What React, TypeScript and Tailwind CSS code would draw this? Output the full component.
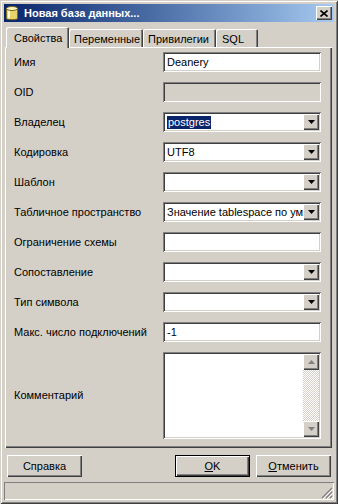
import React from 'react';

const sunken = 'shadow-[inset_1px_1px_#808080,inset_-1px_-1px_#fff,inset_2px_2px_#404040,inset_-2px_-2px_#d4d0c8]';
const raised = 'shadow-[inset_1px_1px_#fff,inset_-1px_-1px_#404040,inset_-2px_-2px_#808080]';
const tabEdge = 'rounded-t-[2px] shadow-[inset_1px_1px_#fff,inset_-1px_0_#404040,inset_-2px_0_#808080]';

const Arrow: React.FC<{ up?: boolean; color?: string }> = ({ up, color = '#000' }) => (
  <svg width="7" height="4" viewBox="0 0 7 4">
    {up ? <path d="M3.5 0 L7 4 L0 4 Z" fill={color} /> : <path d="M0 0 L7 0 L3.5 4 Z" fill={color} />}
  </svg>
);

const DropBtn: React.FC = () => (
  <div className={`w-[16px] h-full bg-[#d4d0c8] flex items-center justify-center ${raised}`}>
    <Arrow />
  </div>
);

const TextField: React.FC<{ value?: string; disabled?: boolean }> = ({ value, disabled }) => (
  <div className={`w-[158px] h-[20px] ${disabled ? 'bg-[#d4d0c8]' : 'bg-white'} ${sunken} flex items-center px-[4px]`}>
    {value}
  </div>
);

const Combo: React.FC<{ value?: string; selected?: boolean }> = ({ value, selected }) => (
  <div className={`w-[158px] h-[20px] bg-white ${sunken} p-[2px] flex`}>
    <div className="flex-1 min-w-0 flex items-center pl-[2px] overflow-hidden whitespace-nowrap">
      {selected ? <span className="bg-[#0a246a] text-white pl-[1px] pr-[1px] leading-[13px]">{value}</span> : value}
    </div>
    <DropBtn />
  </div>
);

type Row = { label: string; kind: 'text' | 'combo' | 'disabled'; value?: string; selected?: boolean };

const ROWS: Row[] = [
  { label: 'Имя', kind: 'text', value: 'Deanery' },
  { label: 'OID', kind: 'disabled' },
  { label: 'Владелец', kind: 'combo', value: 'postgres', selected: true },
  { label: 'Кодировка', kind: 'combo', value: 'UTF8' },
  { label: 'Шаблон', kind: 'combo' },
  { label: 'Табличное пространство', kind: 'combo', value: 'Значение tablespace по умс' },
  { label: 'Ограничение схемы', kind: 'text' },
  { label: 'Сопоставление', kind: 'combo' },
  { label: 'Тип символа', kind: 'combo' },
  { label: 'Макс. число подключений', kind: 'text', value: '-1' },
];

const DbIcon: React.FC = () => (
  <svg width="12" height="15" viewBox="0 0 12 15">
    <path d="M0.5 2.5 V12.5 C0.5 14 11.5 14 11.5 12.5 V2.5 Z" fill="#e8d36a" stroke="#7a6a20" strokeWidth="1" />
    <ellipse cx="6" cy="2.5" rx="5.5" ry="2" fill="#fbf3c0" stroke="#7a6a20" strokeWidth="1" />
    <rect x="2" y="5" width="2" height="7" fill="#fffbe0" />
  </svg>
);

const App: React.FC = () => {
  return (
    <div className="w-[338px] h-[504px] bg-[#d4d0c8] shadow-[inset_1px_1px_#d4d0c8,inset_-1px_-1px_#404040,inset_2px_2px_#fff,inset_-2px_-2px_#808080] p-[4px] flex flex-col font-['Liberation_Sans','DejaVu_Sans',sans-serif] text-[11px] text-black">
      {/* title bar */}
      <div className="h-[18px] bg-gradient-to-r from-[#0a246a] to-[#a6caf0] flex items-center">
        <div className="ml-[2px] w-[12px] flex"><DbIcon /></div>
        <div className="ml-[6px] flex-1 text-white font-bold text-[11px]">Новая база данных...</div>
        <div className={`mr-[2px] w-[16px] h-[14px] bg-[#d4d0c8] ${raised} flex items-center justify-center`}>
          <svg width="8" height="7" viewBox="0 0 8 7">
            <path d="M0.5 0.5 L7.5 6.5 M7.5 0.5 L0.5 6.5" stroke="#000" strokeWidth="1.6" />
          </svg>
        </div>
      </div>

      {/* tabs */}
      <div className="mt-[5px] h-[20px] flex items-end ml-[2px]">
        <div className={`relative z-10 -mb-[1px] w-[63px] h-[21px] bg-[#d4d0c8] ${tabEdge} pl-[8px] pt-[3px]`}>
          Свойства
        </div>
        <div className={`w-[74px] h-[18px] ${tabEdge} pl-[5px] pt-[2px]`}>Переменные</div>
        <div className={`w-[73px] h-[18px] ${tabEdge} pl-[5px] pt-[2px]`}>Привилегии</div>
        <div className={`w-[42px] h-[18px] ${tabEdge} pl-[6px] pt-[2px]`}>SQL</div>
      </div>

      {/* panel */}
      <div className="ml-[1px] w-[327px] h-[401px] bg-[#d4d0c8] shadow-[inset_1px_1px_#fff,inset_-1px_-1px_#404040,inset_-2px_-2px_#808080] pt-[5px] pl-[9px] flex flex-col gap-[10px]">
        {ROWS.map(r => (
          <div key={r.label} className="h-[20px] flex items-center">
            <div className="w-[149px] whitespace-nowrap pt-[1px]">{r.label}</div>
            {r.kind === 'combo' ? (
              <Combo value={r.value} selected={r.selected} />
            ) : (
              <TextField value={r.value} disabled={r.kind === 'disabled'} />
            )}
          </div>
        ))}
        <div className="h-[87px] flex items-center">
          <div className="w-[149px]">Комментарий</div>
          <div className={`w-[158px] h-[87px] bg-white ${sunken} p-[2px] flex`}>
            <div className="flex-1" />
            <div className="w-[16px] flex flex-col">
              <div className={`h-[16px] bg-[#d4d0c8] ${raised} flex items-center justify-center`}>
                <Arrow up color="#808080" />
              </div>
              <div className="flex-1 bg-[repeating-conic-gradient(#fff_0_25%,#d4d0c8_0_50%)] bg-[length:2px_2px]" />
              <div className={`h-[16px] bg-[#d4d0c8] ${raised} flex items-center justify-center`}>
                <Arrow color="#808080" />
              </div>
            </div>
          </div>
        </div>
      </div>

      {/* buttons */}
      <div className="mt-[7px] h-[22px] flex">
        <div className={`ml-[3px] w-[75px] h-[22px] ${raised} flex items-center justify-center`}>Справка</div>
        <div className="flex-1" />
        <div className="w-[75px] h-[22px] border border-black">
          <div className={`w-full h-full ${raised} flex items-center justify-center`}>
            <span><span className="underline">O</span>K</span>
          </div>
        </div>
        <div className={`ml-[6px] mr-[3px] w-[75px] h-[22px] ${raised} flex items-center justify-center`}>
          <span><span className="underline">О</span>тменить</span>
        </div>
      </div>

      {/* status bar */}
      <div className="mt-[5px] h-[18px] shadow-[inset_1px_1px_#808080,inset_-1px_-1px_#fff] flex justify-end items-end">
        <svg width="12" height="12" viewBox="0 0 12 12" className="mr-[1px] mb-[1px]">
          <path d="M11 1 L1 11 M11 5 L5 11 M11 9 L9 11" stroke="#808080" strokeWidth="1.2" />
          <path d="M12 2 L2 12 M12 6 L6 12 M12 10 L10 12" stroke="#fff" strokeWidth="1" />
        </svg>
      </div>
    </div>
  );
};

export default App;
